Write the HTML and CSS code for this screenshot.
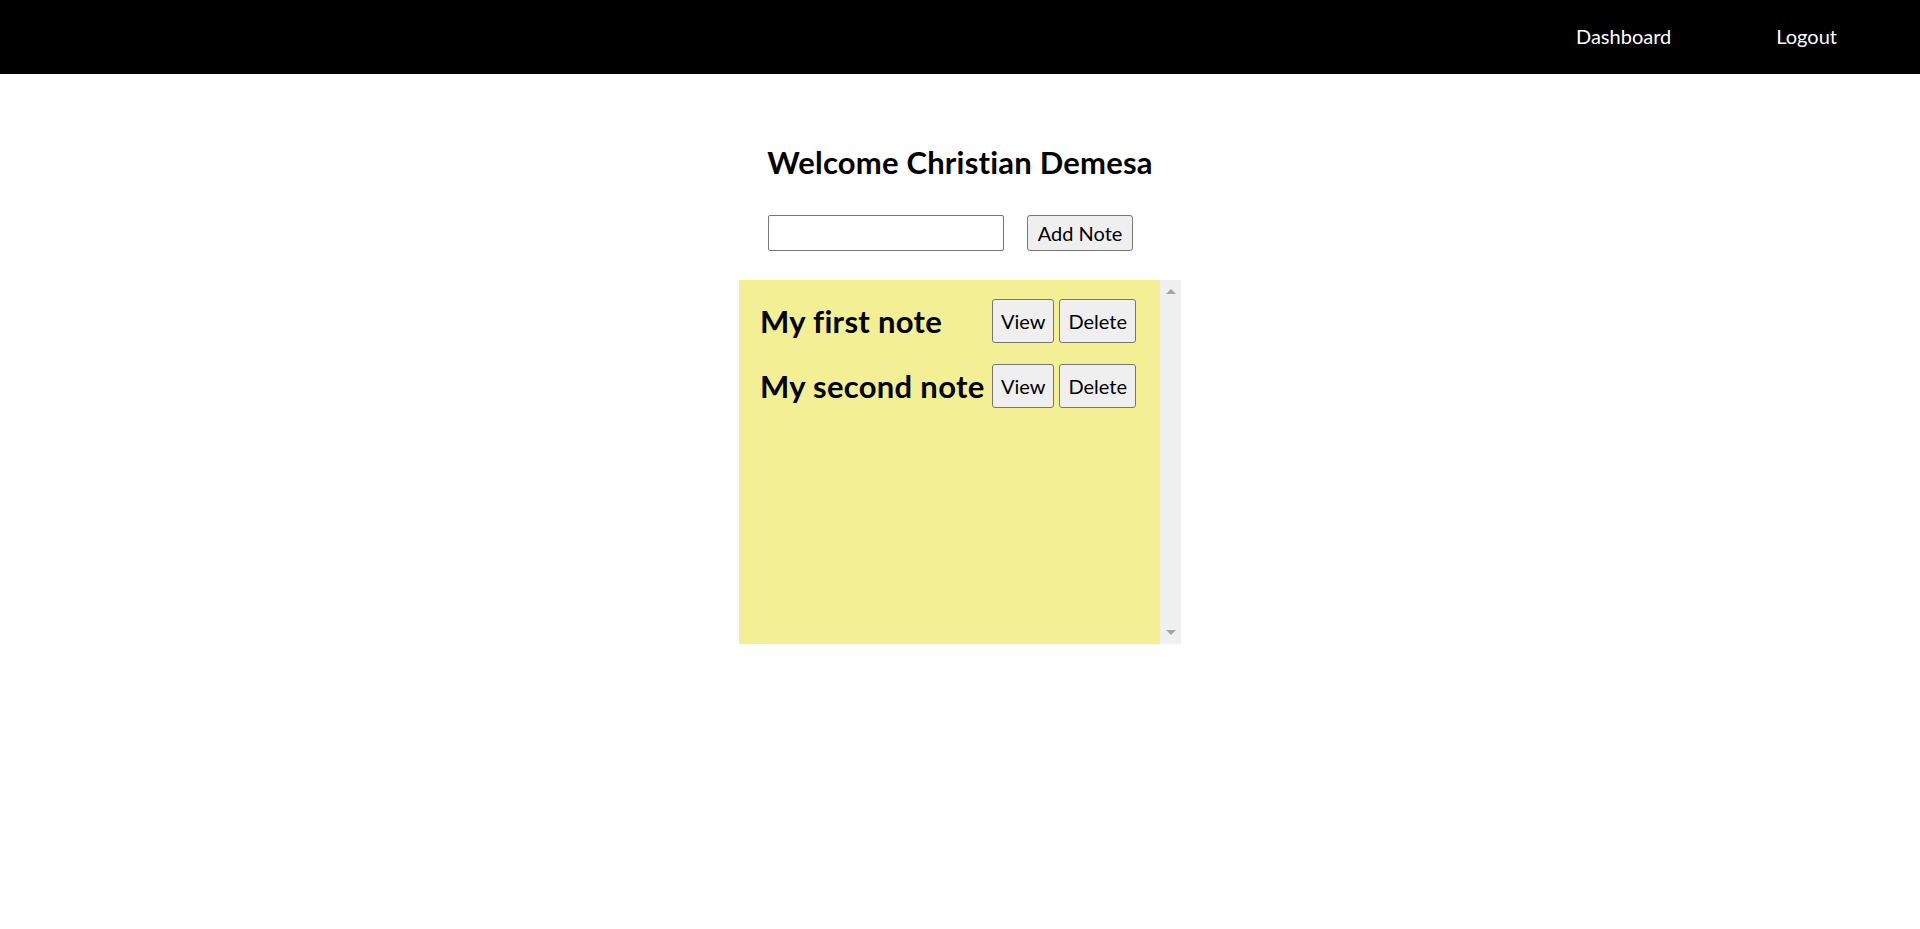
FILE: index.html
```html
<!DOCTYPE html>
<html>
<head>
<meta charset="utf-8">
<link rel="stylesheet" href="styles.css">
</head>
<body>
<nav class="navbar">
  <a class="nav-link" href="#">Dashboard</a>
  <a class="nav-link" href="#">Logout</a>
</nav>
<main class="main">
  <h2 class="welcome">Welcome Christian Demesa</h2>
  <form class="add-form">
    <input class="note-input" type="text">
    <button class="btn add-btn" type="button">Add Note</button>
  </form>
  <section class="notes-box">
    <div class="notes-list">
      <div class="note-row">
        <h2 class="note-title">My first note</h2>
        <div class="note-actions">
          <button class="btn note-btn" type="button">View</button>
          <button class="btn note-btn" type="button">Delete</button>
        </div>
      </div>
      <div class="note-row">
        <h2 class="note-title">My second note</h2>
        <div class="note-actions">
          <button class="btn note-btn" type="button">View</button>
          <button class="btn note-btn" type="button">Delete</button>
        </div>
      </div>
    </div>
    <div class="scrollbar">
      <span class="arrow arrow-up"></span>
      <span class="arrow arrow-down"></span>
    </div>
  </section>
</main>
</body>
</html>
```

FILE: styles.css
```css
* { box-sizing: border-box; }
html, body { margin: 0; padding: 0; background: #fff; }
body {
  font-family: Lato, "Noto Sans", sans-serif;
  font-size: 20px;
  color: #000;
}
.navbar {
  height: 74px;
  background: #000;
  display: flex;
  justify-content: flex-end;
  align-items: center;
  padding-right: 83px;
  gap: 105px;
}
.nav-link {
  color: #fff;
  text-decoration: none;
  font-size: 20px;
  padding-bottom: 2px;
}
.main {
  display: flex;
  flex-direction: column;
  align-items: center;
  padding-top: 68px;
}
.welcome {
  margin: 0;
  font-size: 31px;
  font-weight: 700;
  line-height: 40px;
  letter-spacing: 0.2px;
}
.add-form {
  display: flex;
  gap: 23px;
  margin-top: 33px;
  margin-left: -19px;
}
.note-input {
  width: 236px;
  height: 36px;
  border: 1px solid #767676;
  border-radius: 2px;
  font: inherit;
  padding: 2px 4px;
  background: #fff;
}
.btn {
  font-family: inherit;
  font-size: 20px;
  color: #000;
  background: #efefef;
  border: 1px solid #767676;
  border-radius: 3px;
  padding: 0 7px;
}
.add-btn { height: 36px; width: 106px; }
.notes-box {
  margin-top: 29px;
  width: 442px;
  height: 364px;
  display: flex;
}
.notes-list {
  flex: 1;
  background: #f3ef95;
  padding: 19px 24px 0 21px;
  display: flex;
  flex-direction: column;
  gap: 21px;
}
.note-row {
  display: flex;
  justify-content: space-between;
  align-items: center;
  height: 44px;
}
.note-title {
  margin: 0;
  font-size: 31px;
  font-weight: 700;
  line-height: 40px;
  letter-spacing: 0.3px;
}
.note-actions { display: flex; gap: 5px; }
.note-btn { height: 44px; padding: 0 8px; }
.scrollbar {
  width: 21px;
  background: #f0f0f0;
  display: flex;
  flex-direction: column;
  justify-content: space-between;
  align-items: center;
  padding: 9px 0 9px;
}
.arrow {
  width: 0; height: 0;
  border-left: 5px solid transparent;
  border-right: 5px solid transparent;
}
.arrow-up { border-bottom: 5px solid #a3a3a3; }
.arrow-down { border-top: 5px solid #a3a3a3; }
```
